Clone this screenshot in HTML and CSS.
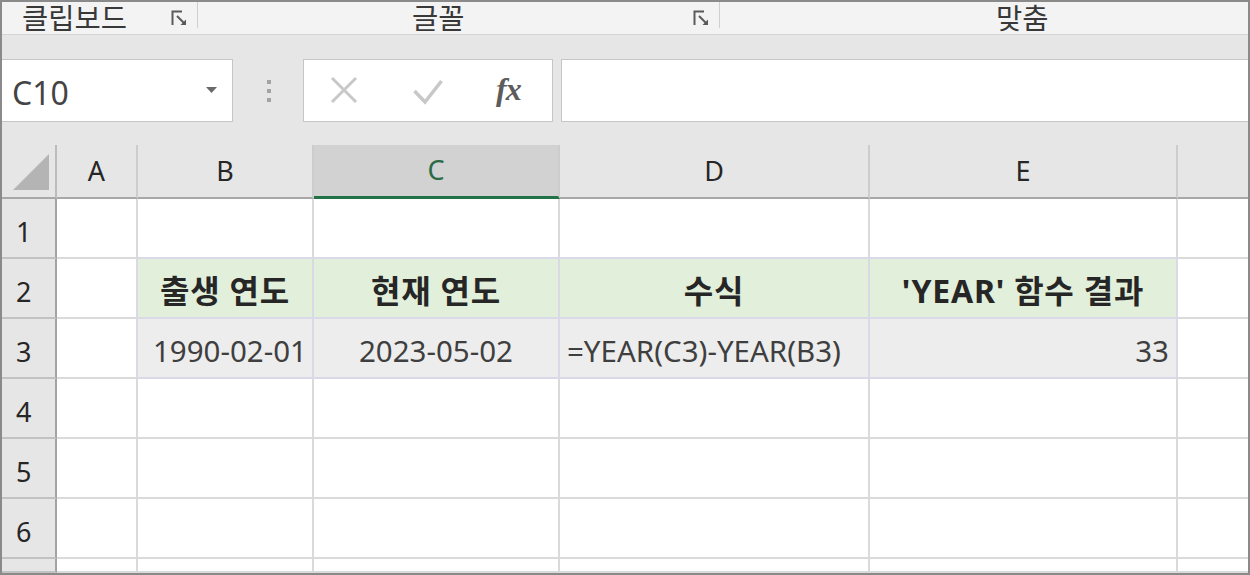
FILE: index.html
```html
<!DOCTYPE html>
<html lang="ko">
<head>
<meta charset="utf-8">
<title>YEAR 함수</title>
<link rel="stylesheet" href="styles.css">
</head>
<body>
<div class="frame">
  <div class="ribbon">
    <div class="group g1">
      <span class="glabel">클립보드</span>
      <svg class="launcher" width="17" height="16" viewBox="0 0 17 16"><path d="M1.5 15V1.5H11" fill="none" stroke="#5a5a5a" stroke-width="2"/><path d="M6 6L14 14" stroke="#5a5a5a" stroke-width="2"/><path d="M9.5 15H15V9.5z" fill="#5a5a5a"/></svg>
    </div>
    <div class="sep"></div>
    <div class="group g2">
      <span class="glabel">글꼴</span>
      <svg class="launcher" width="17" height="16" viewBox="0 0 17 16"><path d="M1.5 15V1.5H11" fill="none" stroke="#5a5a5a" stroke-width="2"/><path d="M6 6L14 14" stroke="#5a5a5a" stroke-width="2"/><path d="M9.5 15H15V9.5z" fill="#5a5a5a"/></svg>
    </div>
    <div class="sep"></div>
    <div class="group g3">
      <span class="glabel">맞춤</span>
    </div>
  </div>

  <div class="fbar">
    <div class="namebox">
      <span class="nbtext">C10</span>
      <svg class="caret" width="11" height="6" viewBox="0 0 11 6"><path d="M0 0H11L5.5 6z" fill="#6a6a6a"/></svg>
    </div>
    <div class="grip"><i></i><i></i><i></i></div>
    <div class="fbtns">
      <svg class="ico-x" width="28" height="28" viewBox="0 0 28 28"><path d="M2 2L26 26M26 2L2 26" stroke="#c8c8c8" stroke-width="3" fill="none"/></svg>
      <svg class="ico-ok" width="30" height="26" viewBox="0 0 30 26"><path d="M1.5 12L12 23L28.5 2" stroke="#c8c8c8" stroke-width="3.5" fill="none"/></svg>
      <span class="fx">fx</span>
    </div>
    <div class="finput"></div>
  </div>

  <div class="sheet">
    <div class="corner"><svg width="40" height="40" viewBox="0 0 40 40"><path d="M2 38H38V2z" fill="#b4b4b4"/></svg></div>
    <div class="ch">A</div>
    <div class="ch">B</div>
    <div class="ch sel">C</div>
    <div class="ch">D</div>
    <div class="ch">E</div>
    <div class="ch last"></div>

    <div class="rh">1</div>
    <div class="c"></div>
    <div class="c above"></div>
    <div class="c above"></div>
    <div class="c above"></div>
    <div class="c above"></div>
    <div class="c end"></div>

    <div class="rh">2</div>
    <div class="c left"></div>
    <div class="c tb hd">출생 연도</div>
    <div class="c tb hd">현재 연도</div>
    <div class="c tb hd">수식</div>
    <div class="c tb hd">'YEAR' 함수 결과</div>
    <div class="c end"></div>

    <div class="rh">3</div>
    <div class="c left"></div>
    <div class="c tb val shift">1990-02-01</div>
    <div class="c tb val">2023-05-02</div>
    <div class="c tb val start">=YEAR(C3)-YEAR(B3)</div>
    <div class="c tb val end-align">33</div>
    <div class="c end"></div>

    <div class="rh">4</div>
    <div class="c"></div><div class="c"></div><div class="c"></div><div class="c"></div><div class="c"></div><div class="c end"></div>

    <div class="rh">5</div>
    <div class="c"></div><div class="c"></div><div class="c"></div><div class="c"></div><div class="c"></div><div class="c end"></div>

    <div class="rh">6</div>
    <div class="c"></div><div class="c"></div><div class="c"></div><div class="c"></div><div class="c"></div><div class="c end"></div>

    <div class="rh"></div>
    <div class="c"></div><div class="c"></div><div class="c"></div><div class="c"></div><div class="c"></div><div class="c end"></div>
  </div>
</div>
</body>
</html>
```

FILE: styles.css
```css
* { box-sizing: border-box; }

html, body {
  margin: 0;
  padding: 0;
  background: #ffffff;
}

body {
  font-family: "Noto Sans", "Noto Sans CJK KR", sans-serif;
  color: #262626;
}

.frame {
  width: 1250px;
  height: 575px;
  border: 2px solid #8a8a8a;
  display: flex;
  flex-direction: column;
  overflow: hidden;
  background: #e6e6e6;
}

/* ribbon group labels */
.ribbon {
  height: 33px;
  flex: none;
  display: flex;
  align-items: flex-start;
  background: #f3f3f3;
  border-bottom: 1px solid #d4d4d4;
}

.group {
  height: 32px;
  display: flex;
  align-items: flex-start;
}

.g1 { width: 195px; padding-left: 20px; }
.g2 { width: 521px; padding-left: 214px; }
.g3 { flex: 1; padding-left: 276px; }

.glabel {
  font-family: "Noto Sans CJK KR", sans-serif;
  font-size: 28.5px;
  line-height: 29px;
  color: #383838;
  margin-top: 0;
}

.launcher {
  margin-left: auto;
  margin-right: 9px;
  margin-top: 8px;
}

.sep {
  width: 1px;
  height: 26px;
  background: #cfcfcf;
  flex: none;
}

/* formula bar */
.fbar {
  flex: none;
  display: flex;
  padding: 24px 0 23px 0;
  height: 110px;
}

.namebox {
  width: 231px;
  height: 63px;
  background: #ffffff;
  border: 1px solid #c6c6c6;
  border-left: none;
  display: flex;
  align-items: center;
  padding-left: 10px;
  padding-right: 15px;
}

.nbtext {
  font-size: 32px;
  color: #444444;
  margin-top: 4px;
}

.caret { margin-left: auto; margin-top: -2px; }

.grip {
  width: 70px;
  display: flex;
  flex-direction: column;
  align-items: center;
  justify-content: center;
  gap: 5px;
  padding-left: 2px;
}

.grip i {
  display: block;
  width: 4px;
  height: 4px;
  background: #a3a3a3;
}

.fbtns {
  width: 250px;
  height: 63px;
  background: #ffffff;
  border: 1px solid #c6c6c6;
  display: flex;
  align-items: center;
  padding-left: 26px;
}

.ico-x { margin-top: -2px; }
.ico-ok { margin-left: 55px; margin-top: 2px; }

.fx {
  margin-left: 53px;
  font-family: "Liberation Serif", serif;
  font-style: italic;
  font-weight: 700;
  font-size: 32px;
  color: #5c5c5c;
  margin-top: -2px;
  letter-spacing: -1px;
}

.finput {
  flex: 1;
  height: 63px;
  margin-left: 8px;
  background: #ffffff;
  border: 1px solid #c6c6c6;
  border-right: none;
}

/* sheet grid */
.sheet {
  flex: 1;
  display: grid;
  grid-template-columns: 55px 81px 176px 246px 310px 308px 1fr;
  grid-template-rows: 54px repeat(6, 60px) 1fr;
  background: #ffffff;
  font-size: 27px;
}

.corner {
  background: #e6e6e6;
  border-right: 2px solid #bcbcbc;
  border-bottom: 2px solid #a8a8a8;
  display: flex;
  align-items: flex-end;
  justify-content: flex-end;
  padding: 0 4px 5px 0;
}

.ch {
  background: #e6e6e6;
  border-right: 2px solid #cdcdcd;
  border-bottom: 2px solid #a8a8a8;
  display: flex;
  align-items: center;
  justify-content: center;
  color: #262626;
  padding-bottom: 2px;
}

.ch.sel {
  background: #d2d2d2;
  color: #2a6b45;
  border-bottom: 3px solid #217346;
}

.ch.last { border-right: none; }

.rh {
  background: #e6e6e6;
  border-right: 2px solid #a3a3a3;
  border-bottom: 2px solid #c2c2c2;
  display: flex;
  align-items: center;
  padding-left: 14px;
  padding-top: 6px;
  color: #262626;
}

.c {
  border-right: 2px solid #dadada;
  border-bottom: 2px solid #dadada;
  display: flex;
  align-items: center;
  justify-content: center;
  white-space: nowrap;
  overflow: hidden;
}

.c.end { border-right: none; }

.c.above { border-bottom-color: #d9d9e8; }
.c.left { border-right-color: #d9d9e8; }

.c.tb {
  border-right-color: #d9d9e8;
  border-bottom-color: #d9d9e8;
}

.c.hd {
  background: #e2efda;
  font-weight: 700;
  font-size: 32px;
  letter-spacing: 0.8px;
  color: #262626;
  padding-top: 2px;
}

.c.val {
  background: #ededed;
  color: #3f3f3f;
  font-size: 29.5px;
  padding-top: 4px;
}

.c.shift { padding-left: 10px; }
.c.start { justify-content: flex-start; padding-left: 7px; }
.c.end-align { justify-content: flex-end; padding-right: 7px; }
```
